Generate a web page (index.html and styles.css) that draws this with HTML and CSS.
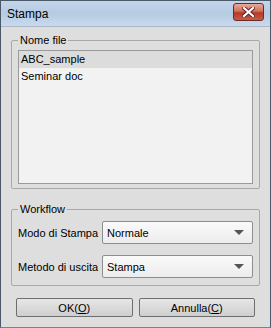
FILE: index.html
```html
<!DOCTYPE html>
<html lang="it">
<head>
  <meta charset="UTF-8">
  <title>Stampa</title>
  <link rel="stylesheet" href="styles.css">
</head>
<body>
  <div class="window">
    <div class="titlebar">
      <span class="title">Stampa</span>
      <button class="close" aria-label="Chiudi">
        <svg width="13" height="10" viewBox="0 0 13 10">
          <path d="M2 1 L11 9 M11 1 L2 9" stroke="#5a2020" stroke-width="4" stroke-linecap="square"/>
          <path d="M2 1 L11 9 M11 1 L2 9" stroke="#ffffff" stroke-width="2.2" stroke-linecap="square"/>
        </svg>
      </button>
    </div>

    <div class="content">
      <fieldset class="group files">
        <legend>Nome file</legend>
        <ul class="listbox">
          <li class="selected">ABC_sample</li>
          <li>Seminar doc</li>
        </ul>
      </fieldset>

      <fieldset class="group workflow">
        <legend>Workflow</legend>
        <div class="row">
          <label>Modo di Stampa</label>
          <div class="select"><span>Normale</span><i class="arrow"></i></div>
        </div>
        <div class="row">
          <label>Metodo di uscita</label>
          <div class="select"><span>Stampa</span><i class="arrow"></i></div>
        </div>
      </fieldset>

      <div class="buttons">
        <button class="btn ok">OK(<u>O</u>)</button>
        <button class="btn cancel">Annulla(<u>C</u>)</button>
      </div>
    </div>
  </div>
</body>
</html>
```

FILE: styles.css
```css
body {
  margin: 0;
  font-family: 'Liberation Sans', Arial, sans-serif;
  font-size: 11px;
  color: #000;
  background: #fff;
}

.window {
  width: 271px;
  height: 328px;
  box-sizing: border-box;
  border: 1px solid #4a5868;
  border-bottom-color: #2a9ad8;
  background: #dedede;
  display: flex;
  flex-direction: column;
}

.titlebar {
  height: 25px;
  flex: none;
  display: flex;
  align-items: center;
  justify-content: space-between;
  padding: 0 6px 0 6px;
  background: linear-gradient(#c3d5ea, #b5cbe3 50%, #c9daec);
  border-bottom: 1px solid #aab8c8;
}

.title {
  font-size: 12px;
  color: #000;
}

.close {
  width: 31px;
  height: 18px;
  margin-top: -3px;
  padding: 0;
  border: 1px solid #6b2a2a;
  border-radius: 3px;
  background: linear-gradient(#e9a99b, #d0705d 45%, #b73a28 55%, #c85c45);
  display: flex;
  align-items: center;
  justify-content: center;
}

.content {
  flex: 1;
  padding: 7px 10px 0 10px;
  display: flex;
  flex-direction: column;
}

.group {
  margin: 0;
  padding: 0 6px;
  border: 1px solid #a8a8a8;
  border-radius: 2px;
}

.group legend {
  padding: 0 2px;
  margin-left: 0;
  font-size: 11px;
}

.files {
  height: 155px;
  box-sizing: border-box;
  padding-top: 4px;
}

.listbox {
  list-style: none;
  margin: 0;
  padding: 0;
  height: 134px;
  box-sizing: border-box;
  border: 1px solid #9a9a9a;
  background: #f2f2f2;
}

.listbox li {
  height: 17px;
  line-height: 17px;
  padding-left: 2px;
}

.listbox li.selected {
  background: #dcdcdc;
}

.workflow {
  margin-top: 14px;
  height: 83px;
  box-sizing: border-box;
  padding-top: 6px;
}

.row {
  display: flex;
  align-items: center;
  height: 23px;
  margin-bottom: 11px;
}

.row label {
  width: 84px;
  flex: none;
}

.select {
  flex: 1;
  height: 23px;
  box-sizing: border-box;
  border: 1px solid #8e8e8e;
  border-radius: 2px;
  background: linear-gradient(#fafafa, #ececec);
  display: flex;
  align-items: center;
  justify-content: space-between;
  padding: 0 8px 0 4px;
}

.arrow {
  width: 0;
  height: 0;
  border-left: 5px solid transparent;
  border-right: 5px solid transparent;
  border-top: 5px solid #555;
}

.buttons {
  display: flex;
  gap: 6px;
  margin-top: 12px;
  padding: 0 5px;
}

.btn {
  flex: 1;
  height: 19px;
  padding: 0;
  font-family: inherit;
  font-size: 11px;
  border: 1px solid #6e6e6e;
  border-radius: 2px;
  background: linear-gradient(#e6e6e6, #cfcfcf);
}
```
